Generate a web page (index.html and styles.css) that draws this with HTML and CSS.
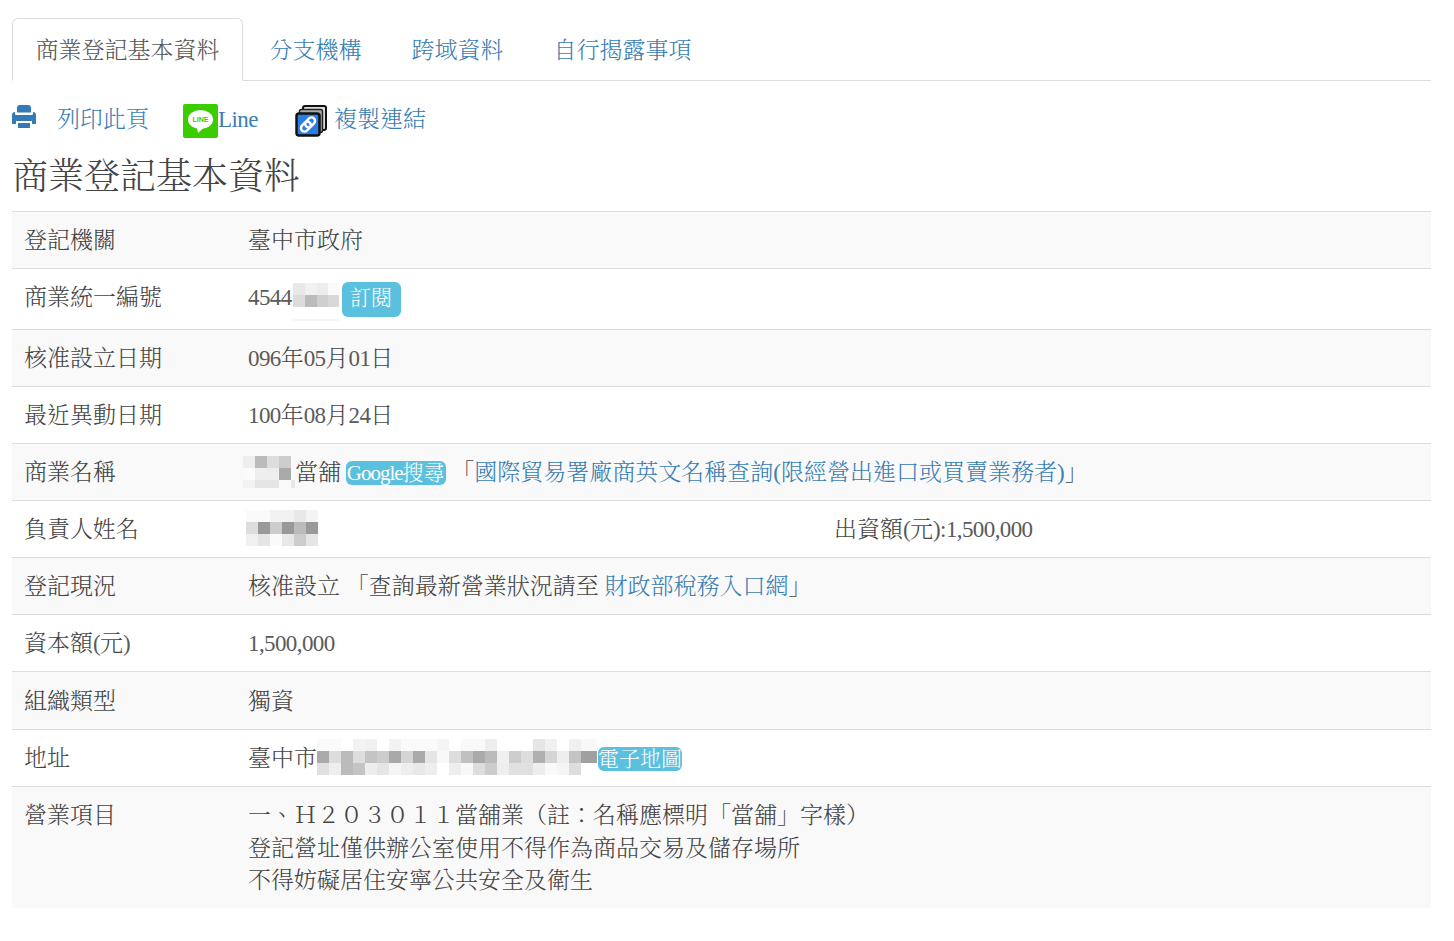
FILE: index.html
```html
<!DOCTYPE html>
<html lang="zh-Hant">
<head>
<meta charset="utf-8">
<title>商業登記基本資料</title>
<link rel="stylesheet" href="styles.css">
</head>
<body>
<ul class="tabs">
  <li class="tab active"><a href="#">商業登記基本資料</a></li>
  <li class="tab"><a href="#">分支機構</a></li>
  <li class="tab"><a href="#">跨域資料</a></li>
  <li class="tab"><a href="#">自行揭露事項</a></li>
</ul>
<div class="actions">
  <a class="action print" href="#">
    <svg class="ico-print" viewBox="0 0 24 24"><path fill="#337ab7" d="M5 7.500V3a3 3 0 0 1 3-3h8a3 3 0 0 1 3 3v4.500zM0 10a3 3 0 0 1 3-3v2a1 1 0 0 0 1 1h16a1 1 0 0 0 1-1V7a3 3 0 0 1 3 3v9h-4v-3H4v3H0zM6 18h12v5H6z"/></svg>
    <span>列印此頁</span>
  </a>
  <a class="action line" href="#">
    <svg class="ico-line" viewBox="0 0 35 34"><rect width="35" height="34" rx="2" fill="#3ace01"/><ellipse cx="17.500" cy="15.500" rx="12.500" ry="9.500" fill="#fff"/><path fill="#fff" d="M14 24h6.500l-5.500 5z"/><text x="17.500" y="18" text-anchor="middle" class="line-txt">LINE</text></svg>
    <span class="lat">Line</span>
  </a>
  <a class="action copy" href="#">
    <svg class="ico-copy" viewBox="0 0 32 32"><rect x="8" y="1" width="23" height="24" rx="2" fill="#ddd" stroke="#111" stroke-width="2"/><rect x="4.500" y="4.500" width="23" height="23" rx="2" fill="#aaa" stroke="#222" stroke-width="1.500"/><rect x="1.500" y="8.500" width="23" height="22" rx="2.500" fill="#2a7de1" stroke="#111" stroke-width="2.500"/><g class="chain"><rect x="4.500" y="16" width="11" height="7" rx="3.500" transform="rotate(-45 13 19.500)"/><rect x="10.500" y="16" width="11" height="7" rx="3.500" transform="rotate(-45 13 19.500)"/></g></svg>
    <span>複製連結</span>
  </a>
</div>
<h1>商業登記基本資料</h1>
<table class="info">
  <tr><th>登記機關</th><td>臺中市政府</td></tr>
  <tr><th>商業統一編號</th><td><div class="id-cell"><span class="lat">4544</span><svg class="mosaic m-id" viewBox="0 0 46 38"><rect width="46" height="12" fill="#f1f1f1"/><rect width="12" height="12" fill="#e8e8e8"/><rect x="24" width="11" height="12" fill="#ededed"/><rect x="35" width="11" height="12" fill="#fafafa"/><rect y="12" width="12" height="12" fill="#dcdcdc"/><rect x="12" y="12" width="12" height="12" fill="#bbb"/><rect x="24" y="12" width="11" height="12" fill="#cfcfcf"/><rect x="35" y="12" width="11" height="12" fill="#d8d8d8"/><rect y="36" width="46" height="2" fill="#f5f5f5"/></svg><a class="badge-sub" href="#">訂閱</a></div></td></tr>
  <tr><th>核准設立日期</th><td><span class="lat">096</span>年<span class="lat">05</span>月<span class="lat">01</span>日</td></tr>
  <tr><th>最近異動日期</th><td><span class="lat">100</span>年<span class="lat">08</span>月<span class="lat">24</span>日</td></tr>
  <tr><th>商業名稱</th><td><svg class="mosaic m-name" viewBox="0 0 52 36"><rect width="12" height="12" fill="#eee"/><rect x="12" width="12" height="12" fill="#bbb"/><rect x="24" width="12" height="12" fill="#ddd"/><rect x="36" width="12" height="12" fill="#ccc"/><rect y="12" width="12" height="12" fill="#fafafa"/><rect x="12" y="12" width="24" height="12" fill="#eee"/><rect x="36" y="12" width="12" height="12" fill="#aaa"/><rect y="24" width="12" height="8" fill="#f2f2f2"/><rect x="12" y="24" width="24" height="8" fill="#e5e5e5"/><rect x="48" y="24" width="4" height="8" fill="#e8e8e8"/></svg>當舖 <a class="inline-badge badge-google" href="#"><span class="lat">Google</span>搜尋</a> 「<a href="#">國際貿易署廠商英文名稱查詢(限經營出進口或買賣業務者)</a>」</td></tr>
  <tr><th>負責人姓名</th><td><div class="owner"><span class="owner-name"><svg class="mosaic m-owner" viewBox="0 0 72 36"><rect width="24" height="12" fill="#fafafa"/><rect x="24" width="24" height="12" fill="#f2f2f2"/><rect x="48" width="12" height="12" fill="#e8e8e8"/><rect x="60" width="12" height="12" fill="#f3f3f3"/><rect y="12" width="12" height="12" fill="#ddd"/><rect x="12" y="12" width="12" height="12" fill="#999"/><rect x="24" y="12" width="12" height="12" fill="#ccc"/><rect x="36" y="12" width="12" height="12" fill="#999"/><rect x="48" y="12" width="12" height="12" fill="#bbb"/><rect x="60" y="12" width="12" height="12" fill="#999"/><rect y="24" width="12" height="12" fill="#f0f0f0"/><rect x="12" y="24" width="12" height="12" fill="#e5e5e5"/><rect x="24" y="24" width="12" height="12" fill="#fafafa"/><rect x="36" y="24" width="12" height="12" fill="#e8e8e8"/><rect x="48" y="24" width="12" height="12" fill="#ccc"/><rect x="60" y="24" width="12" height="12" fill="#e5e5e5"/></svg></span><span>出資額<span class="lat">(</span>元<span class="lat">):1,500,000</span></span></div></td></tr>
  <tr><th>登記現況</th><td>核准設立 「查詢最新營業狀況請至 <a href="#">財政部稅務入口網</a>」</td></tr>
  <tr><th>資本額<span class="lat">(</span>元<span class="lat">)</span></th><td><span class="lat">1,500,000</span></td></tr>
  <tr class="row-tall"><th>組織類型</th><td>獨資</td></tr>
  <tr><th>地址</th><td>臺中市<svg class="mosaic m-addr" viewBox="0 0 280 36"><rect x="0" y="0" width="24" height="12" fill="#fafafa"/><rect x="36" y="0" width="12" height="12" fill="#f3f3f3"/><rect x="48" y="0" width="12" height="12" fill="#f0f0f0"/><rect x="72" y="0" width="12" height="12" fill="#f2f2f2"/><rect x="84" y="0" width="36" height="12" fill="#fafafa"/><rect x="120" y="0" width="12" height="12" fill="#f5f5f5"/><rect x="144" y="0" width="24" height="12" fill="#f9f9f9"/><rect x="168" y="0" width="12" height="12" fill="#eee"/><rect x="216" y="0" width="12" height="12" fill="#e5e5e5"/><rect x="228" y="0" width="12" height="12" fill="#f0f0f0"/><rect x="252" y="0" width="12" height="12" fill="#f0f0f0"/><rect x="264" y="0" width="16" height="12" fill="#f8f8f8"/><rect x="0" y="12" width="12" height="12" fill="#aaa"/><rect x="12" y="12" width="12" height="12" fill="#ddd"/><rect x="24" y="12" width="12" height="12" fill="#bbb"/><rect x="36" y="12" width="12" height="12" fill="#ddd"/><rect x="48" y="12" width="12" height="12" fill="#c4c4c4"/><rect x="60" y="12" width="12" height="12" fill="#ccc"/><rect x="72" y="12" width="12" height="12" fill="#a8a8a8"/><rect x="84" y="12" width="12" height="12" fill="#d5d5d5"/><rect x="96" y="12" width="12" height="12" fill="#aaa"/><rect x="108" y="12" width="12" height="12" fill="#e5e5e5"/><rect x="120" y="12" width="12" height="12" fill="#f8f8f8"/><rect x="132" y="12" width="12" height="12" fill="#ddd"/><rect x="144" y="12" width="12" height="12" fill="#c0c0c0"/><rect x="156" y="12" width="12" height="12" fill="#aaa"/><rect x="168" y="12" width="12" height="12" fill="#bbb"/><rect x="180" y="12" width="12" height="12" fill="#f0f0f0"/><rect x="192" y="12" width="12" height="12" fill="#ccc"/><rect x="204" y="12" width="12" height="12" fill="#ddd"/><rect x="216" y="12" width="12" height="12" fill="#b0b0b0"/><rect x="228" y="12" width="12" height="12" fill="#d5d5d5"/><rect x="240" y="12" width="12" height="12" fill="#eee"/><rect x="252" y="12" width="12" height="12" fill="#c4c4c4"/><rect x="264" y="12" width="16" height="12" fill="#a0a0a0"/><rect x="0" y="24" width="12" height="12" fill="#e0e0e0"/><rect x="12" y="24" width="12" height="12" fill="#eee"/><rect x="24" y="24" width="12" height="12" fill="#bbb"/><rect x="36" y="24" width="12" height="12" fill="#c4c4c4"/><rect x="48" y="24" width="12" height="12" fill="#eee"/><rect x="60" y="24" width="12" height="12" fill="#e5e5e5"/><rect x="72" y="24" width="12" height="12" fill="#f5f5f5"/><rect x="84" y="24" width="12" height="12" fill="#eee"/><rect x="96" y="24" width="12" height="12" fill="#e8e8e8"/><rect x="108" y="24" width="12" height="12" fill="#eee"/><rect x="132" y="24" width="12" height="12" fill="#eee"/><rect x="144" y="24" width="12" height="12" fill="#f8f8f8"/><rect x="156" y="24" width="12" height="12" fill="#ddd"/><rect x="168" y="24" width="12" height="12" fill="#ccc"/><rect x="180" y="24" width="12" height="12" fill="#eee"/><rect x="192" y="24" width="24" height="12" fill="#e0e0e0"/><rect x="216" y="24" width="12" height="12" fill="#eee"/><rect x="228" y="24" width="12" height="12" fill="#fafafa"/><rect x="240" y="24" width="12" height="12" fill="#f5f5f5"/><rect x="252" y="24" width="12" height="12" fill="#ddd"/></svg><a class="inline-badge badge-map" href="#">電子地圖</a></td></tr>
  <tr><th>營業項目</th><td>一、Ｈ２０３０１１當舖業（註：名稱應標明「當舖」字樣）<br>登記營址僅供辦公室使用不得作為商品交易及儲存場所<br>不得妨礙居住安寧公共安全及衛生</td></tr>
</table>
</body>
</html>
```

FILE: styles.css
```css
* { box-sizing: border-box; }
html, body { margin: 0; padding: 0; background: #fff; }
body {
  padding: 18px 23px 0 12px;
  font-family: "Liberation Serif", "Noto Serif CJK TC", "Noto Sans CJK TC", serif;
  font-size: 23px;
  font-weight: 300;
  line-height: 32.1px;
  color: #444;
}
a { color: #3a7db3; text-decoration: none; }
.lat { letter-spacing: -0.6px; }
.info td .lat, .info th .lat { color: #5a5a5a; }
.tabs {
  display: flex;
  list-style: none;
  margin: 0;
  padding: 0;
  border-bottom: 1px solid #ddd;
}
.tab { margin: 0 3px -1px 0; }
.tab a {
  display: block;
  padding: 16px 22.5px 13px;
  border: 1px solid transparent;
  border-radius: 6px 6px 0 0;
}
.tab.active a {
  color: #555;
  background: #fff;
  border-color: #ddd #ddd #fff;
}
.actions {
  display: flex;
  align-items: center;
  height: 40px;
  margin-top: 20px;
}
.action { display: flex; align-items: center; }
.print { width: 171px; }
.ico-print { width: 24px; height: 24px; margin-right: 21px; margin-top: -8px; }
.line { width: 112px; }
.ico-line { width: 35px; height: 34px; display: block; }
.line-txt { font: bold 7px "Liberation Sans", sans-serif; fill: #3ace01; }
.ico-copy { width: 32px; height: 32px; margin-right: 7px; display: block; }
.chain rect { fill: none; stroke: #fff; stroke-width: 2.5; }
.actions span { position: relative; top: -1px; }
h1 {
  margin: 17px 0 12.9px;
  font-size: 36px;
  font-weight: 300;
  line-height: 1.1;
  color: #444;
}
.info { width: 100%; border-collapse: collapse; }
.info tr { border-top: 1px solid #ddd; }
.info tr:nth-child(odd) { background: #f9f9f9; }
.info th, .info td {
  padding: 13px 12px 11px;
  text-align: left;
  font-weight: 300;
  vertical-align: top;
}
.info .row-tall th, .info .row-tall td { padding-top: 14px; }
.info th { width: 224px; }
.mosaic { display: inline-block; vertical-align: middle; }
.id-cell { display: flex; align-items: flex-start; height: 36px; }
.m-id { width: 46px; height: 38px; margin: 1px 3px 0 1px; }
.badge-sub {
  padding: 0 8.5px;
  height: 35px;
  line-height: 33px;
  font-size: 21px;
  color: #fff;
  background: #5bc0de;
  border-radius: 6px;
}
.inline-badge {
  padding: 0 1px;
  font-size: 21px;
  line-height: 1;
  color: #fff;
  background: #5bc0de;
  border-radius: 6px;
}
.info td .badge-google .lat { color: #fff; letter-spacing: -1px; }
.badge-google { margin-left: -1px; }
.badge-map { padding: 0; margin-left: 1px; }
.m-name { width: 52px; height: 36px; margin: -11px 0 -9px -5px; }
.owner { display: flex; }
.owner-name { width: 586px; }
.m-owner { width: 72px; height: 36px; margin: -14px 0 -6px -2px; }
.m-addr { width: 280px; height: 36px; margin: -14px 0 -6px 0; }
```
